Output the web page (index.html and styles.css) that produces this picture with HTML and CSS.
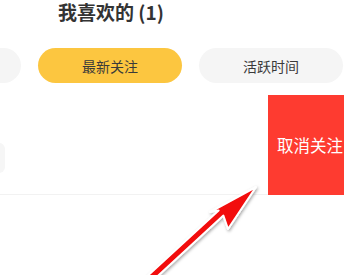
FILE: index.html
```html
<!DOCTYPE html>
<html>
<head>
<meta charset="utf-8">
<link rel="stylesheet" href="styles.css">
</head>
<body>
<div class="page">
  <div class="title">我喜欢的 (1)</div>
  <div class="tabs">
    <div class="pill"></div>
    <div class="pill active">最新关注</div>
    <div class="pill">活跃时间</div>
  </div>
  <div class="swipe-row">
    <div class="item">
      <div class="item-btn"></div>
    </div>
    <div class="unfollow">取消关注</div>
  </div>
  <svg class="arrow" width="344" height="275" viewBox="0 0 344 275">
    <defs>
      <filter id="sh" x="-20%" y="-20%" width="140%" height="140%">
        <feDropShadow dx="1" dy="1.5" stdDeviation="1.5" flood-color="#000" flood-opacity="0.35"/>
      </filter>
    </defs>
    <polygon points="256,187 228,229 223.4,215.6 142.6,290 132.2,290 218.6,210.4 210,212" fill="#f20a0a" stroke="#fff" stroke-width="2" stroke-linejoin="round" filter="url(#sh)"/>
  </svg>
</div>
</body>
</html>
```
FILE: styles.css
```css
html, body {
  margin: 0;
  padding: 0;
  background: #fff;
}
.page {
  position: relative;
  width: 344px;
  height: 275px;
  overflow: hidden;
  font-family: "Noto Sans CJK SC", "Noto Sans", sans-serif;
  color: #333;
}
.title {
  height: 24px;
  padding-left: 58px;
  font-size: 19px;
  font-weight: 700;
  line-height: 23px;
  color: #333;
}
.tabs {
  display: flex;
  gap: 17px;
  margin-top: 24px;
  margin-left: -123px;
  height: 35px;
}
.pill {
  flex: 0 0 144px;
  height: 35px;
  border-radius: 18px;
  background: #f5f5f5;
  display: flex;
  align-items: center;
  justify-content: center;
  font-size: 14px;
  color: #3a3a3a;
}
.pill.active {
  background: #fcc640;
}
.swipe-row {
  display: flex;
  margin-top: 12px;
  height: 100px;
}
.item {
  flex: 0 0 268px;
  border-bottom: 1px solid #f2f2f2;
  box-sizing: border-box;
  display: flex;
  align-items: flex-start;
}
.item-btn {
  width: 30px;
  height: 30px;
  margin-top: 48px;
  margin-left: -25px;
  border-radius: 6px;
  background: #f6f6f6;
}
.unfollow {
  flex: 0 0 90px;
  background: #fe3b30;
  color: #fff;
  font-size: 16.5px;
  display: flex;
  align-items: center;
  padding-left: 9px;
  box-sizing: border-box;
  white-space: nowrap;
}
.arrow {
  position: absolute;
  left: 0;
  top: 0;
}
```
